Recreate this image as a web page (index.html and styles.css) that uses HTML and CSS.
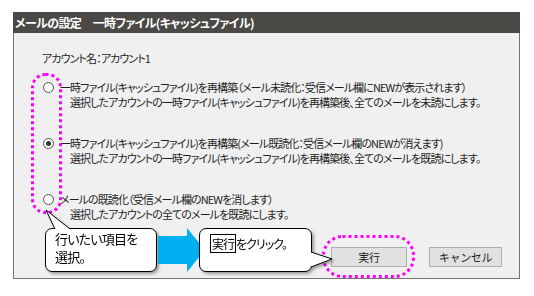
FILE: index.html
```html
<!DOCTYPE html>
<html lang="ja">
<head>
  <meta charset="UTF-8" />
  <title>メールの設定 一時ファイル</title>
  <link rel="stylesheet" href="styles.css">
</head>
<body>
  <div class="dialog">
    <div class="titlebar">メールの設定　一時ファイル(キャッシュファイル)</div>
    <div class="content">
      <div class="account">アカウント名：アカウント1</div>

      <div class="options">
        <div class="option">
          <span class="radio"></span>
          <div class="label">
            <div>一時ファイル(キャッシュファイル)を再構築（メール未読化：受信メール欄にNEWが表示されます）</div>
            <div class="desc">選択したアカウントの一時ファイル(キャッシュファイル)を再構築後、全てのメールを未読にします。</div>
          </div>
        </div>
        <div class="option">
          <span class="radio checked"></span>
          <div class="label">
            <div>一時ファイル(キャッシュファイル)を再構築(メール既読化：受信メール欄のNEWが消えます)</div>
            <div class="desc">選択したアカウントの一時ファイル(キャッシュファイル)を再構築後、全てのメールを既読にします。</div>
          </div>
        </div>
        <div class="option">
          <span class="radio"></span>
          <div class="label">
            <div>メールの既読化（受信メール欄のNEWを消します）</div>
            <div class="desc">選択したアカウントの全てのメールを既読にします。</div>
          </div>
        </div>
      </div>

      <div class="buttons">
        <button class="btn btn-run">実行</button>
        <button class="btn btn-cancel">キャンセル</button>
      </div>

      <!-- annotations -->
      <svg class="mark mark-radios" width="31" height="141">
        <rect x="1.5" y="1.5" width="28" height="138" rx="13" />
      </svg>
      <svg class="mark mark-run" width="93" height="43">
        <rect x="1.5" y="1.5" width="90" height="40" rx="19" />
      </svg>

      <div class="callout callout-select">
        行いたい項目を<br>選択。
        <svg class="tail" width="30" height="22">
          <polyline points="11,21 2,2 26,21" />
        </svg>
      </div>

      <svg class="arrow" width="48" height="46">
        <polygon points="0,8 29,8 29,0 47,22 29,44 29,36 0,36" />
      </svg>

      <div class="callout callout-run">
        <span class="boxed">実行</span>をクリック。
        <svg class="tail" width="26" height="22">
          <polyline points="1,3 22,10 1,18" />
        </svg>
      </div>
    </div>
  </div>
</body>
</html>
```

FILE: styles.css
```css
* {
  box-sizing: border-box;
}

body {
  margin: 0;
  background: #ffffff;
  font-family: "Noto Sans CJK JP", "Noto Sans", sans-serif;
  font-feature-settings: "palt";
  color: #1e1e1e;
}

.dialog {
  margin: 12px 0 0 13px;
  width: 507px;
}

.titlebar {
  height: 21px;
  line-height: 21px;
  padding-left: 2px;
  background: #4b4946;
  color: #ffffff;
  font-size: 12px;
  font-weight: bold;
  letter-spacing: -0.6px;
  white-space: nowrap;
}

.content {
  position: relative;
  display: flex;
  flex-direction: column;
  height: 246px;
  padding: 18px 17px 11px 28px;
  background: #f0f0f0;
  border: 1px solid #747474;
  border-top: none;
  font-size: 11px;
  line-height: 15px;
  letter-spacing: -0.9px;
  white-space: nowrap;
}

.options {
  display: flex;
  flex-direction: column;
  gap: 26px;
  margin-top: 14px;
  padding-left: 1px;
}

.option {
  display: flex;
  gap: 6px;
}

.radio {
  position: relative;
  flex: none;
  width: 11px;
  height: 11px;
  margin-top: 2px;
  border: 1px solid #505050;
  border-radius: 50%;
  background: #ffffff;
}

.radio.checked::after {
  content: "";
  position: absolute;
  left: 2px;
  top: 2px;
  width: 5px;
  height: 5px;
  border-radius: 50%;
  background: #333333;
}

.desc {
  padding-left: 10px;
}

.buttons {
  display: flex;
  justify-content: flex-end;
  gap: 22px;
  margin-top: auto;
}

.btn {
  height: 20px;
  padding: 0;
  font-family: inherit;
  font-size: 11px;
  letter-spacing: -0.3px;
  color: #1e1e1e;
  background: #e1e1e1;
  border: 1px solid #adadad;
}

.btn-run {
  width: 76px;
}

.btn-cancel {
  width: 73px;
}

/* annotation layer */
.mark {
  position: absolute;
}

.mark rect {
  fill: none;
  stroke: #ff00ff;
  stroke-width: 3;
  stroke-dasharray: 3 3;
}

.mark-radios {
  left: 17px;
  top: 40px;
}

.mark-run {
  left: 308px;
  top: 202px;
}

.callout {
  position: absolute;
  top: 195px;
  height: 44px;
  background: #ffffff;
  border: 1px solid #000000;
  border-radius: 7px;
  filter: drop-shadow(2px 2px 1.5px rgba(0, 0, 0, 0.35));
  color: #000000;
  font-size: 13px;
  line-height: 18px;
  letter-spacing: -0.8px;
}

.callout .tail {
  position: absolute;
  overflow: visible;
}

.tail polyline {
  fill: #ffffff;
  stroke: #000000;
  stroke-width: 1;
}

.callout-select {
  left: 31px;
  width: 112px;
  padding: 1px 0 0 9px;
}

.callout-select .tail {
  left: -2px;
  top: -21px;
}

.callout-run {
  left: 185px;
  width: 113px;
  padding: 6px 0 0 10px;
  font-size: 12px;
  letter-spacing: -1px;
}

.callout-run .tail {
  left: 110px;
  top: 20px;
}

.boxed {
  border: 1px solid #000000;
  padding: 0 1px;
}

.arrow {
  position: absolute;
  left: 144px;
  top: 195px;
}

.arrow polygon {
  fill: #00b0f0;
}
```
